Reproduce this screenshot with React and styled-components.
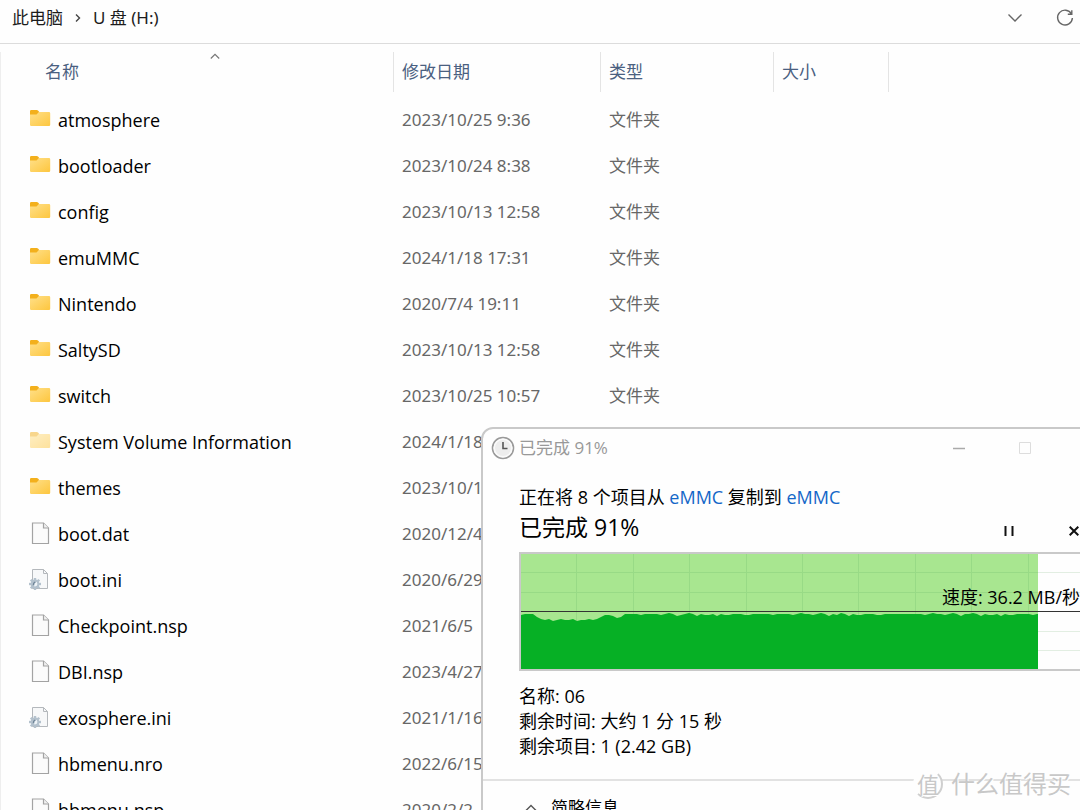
import React from 'react';
import styled, { createGlobalStyle } from 'styled-components';

const Global = createGlobalStyle`
  *, *::before, *::after { box-sizing: border-box; }
  html, body { margin: 0; background: #fefefe; }
  body {
    font-family: "Noto Sans", "Noto Sans CJK SC", sans-serif;
    font-size: 17px;
    line-height: 24px;
  }
  button { padding: 0; border: 0; background: none; color: inherit; font: inherit; }
  svg { display: block; }
`;

const Explorer = styled.div`
  position: relative;
  height: 100vh;
  overflow: hidden;
  color: #111;
`;

const AddressBar = styled.header`
  display: flex;
  align-items: center;
  justify-content: space-between;
  height: 44px;
  padding: 0 5px 7px 12px;
  border-bottom: 1px solid #dcdcdc;
`;

const Crumbs = styled.nav`
  display: flex;
  align-items: center;
  gap: 12px;
`;

const Crumb = styled.a`
  color: #1c1c1c;
  text-decoration: none;
`;

const BarActions = styled.div`
  display: flex;
  gap: 30px;
`;

const IconButton = styled.button`
  display: grid;
  place-items: center;
  width: 20px;
  height: 20px;
`;

const ListPane = styled.main`
  margin-top: 8px;
  border-left: 1px solid #eee;
`;

const FileTable = styled.table`
  width: 100%;
  table-layout: fixed;
  border-collapse: collapse;
  text-align: left;
`;

const Col = styled.col`
  width: ${(p) => p.$width};
`;

const HeadCell = styled.th`
  padding: 0 0 5px;
  font-weight: 400;
`;

const SortButton = styled.button`
  display: flex;
  flex-direction: column;
  width: 100%;
  height: 40px;
  padding-left: ${(p) => p.$indent || '8px'};
  border-right: 1px solid #e4e4e4;
  color: #4a6080;
  text-align: left;
`;

const SortMark = styled.span`
  display: flex;
  justify-content: center;
  width: 100%;
  height: 8px;
  padding-right: 8px;
`;

const NameCell = styled.th`
  height: 46px;
  padding: 0;
  color: #000;
  font-family: "Open Sans", "Noto Sans CJK SC", sans-serif;
  font-size: 18px;
  font-weight: 400;
`;

const FileLabel = styled.span`
  display: flex;
  align-items: center;
  gap: 7px;
  padding-left: 28px;
  white-space: nowrap;
`;

const Cell = styled.td`
  height: 46px;
  padding: 0 0 0 8px;
  color: #676767;
  white-space: nowrap;
`;

const CopyWindow = styled.section`
  position: absolute;
  top: 427px;
  left: 481px;
  width: 648px;
  border: 2px solid #c9c9c9;
  border-radius: 12px;
  background: #fefefe;
  color: #000;
  font-family: "Open Sans", "Noto Sans CJK SC", sans-serif;
`;

const TitleBar = styled.div`
  display: flex;
  align-items: center;
  justify-content: space-between;
  height: 38px;
  padding: 0 92px 0 8px;
  color: #999;
`;

const TitleText = styled.span`
  display: flex;
  align-items: center;
  gap: 4px;
`;

const TitleActions = styled.div`
  display: flex;
  gap: 46px;
`;

const CopyBody = styled.div`
  padding: 18px 37px 0 36px;
  font-size: 18px;
`;

const Line = styled.p`
  margin: 0;
  line-height: 25px;
`;

const PlaceLink = styled.a`
  color: #1467c8;
  text-decoration: none;
`;

const StatusRow = styled.div`
  display: flex;
  align-items: flex-start;
  justify-content: space-between;
  height: 42px;
`;

const Status = styled.h1`
  margin: 0;
  font-size: 23px;
  line-height: 34px;
  font-weight: 400;
`;

const CopyActions = styled.div`
  display: flex;
  gap: 45px;
  padding: 11px 6px 0 0;
`;

const SpeedGraph = styled.div`
  position: relative;
  height: 119px;
  border: 2px solid #c9c9c9;
  background: #fefefe;
`;

const SpeedLabel = styled.span`
  position: absolute;
  top: 31px;
  right: 8px;
`;

const Details = styled.div`
  padding-top: 13px;
`;

const Footer = styled.div`
  display: flex;
  margin-top: 20px;
  padding: 15px 40px;
  border-top: 2px solid #e2e2e2;
`;

const MoreButton = styled.button`
  display: flex;
  align-items: center;
  gap: 12px;
`;

const Watermark = styled.div`
  position: absolute;
  right: 9px;
  bottom: 10px;
  display: flex;
  align-items: center;
  gap: 8px;
  color: #c8c8c8;
  font-size: 24px;
  line-height: 32px;
  text-shadow: 1px 1px 0 #fff;
`;

const Seal = styled.span`
  display: grid;
  place-items: center;
  width: 30px;
  height: 30px;
  border: 2px solid #cfcfcf;
  border-left-color: transparent;
  border-top-color: transparent;
  border-radius: 50%;
  background: #fefefe;
  font-size: 22px;
  line-height: 24px;
`;

const FolderIcon = ({ faded }) => (
  <svg width="22" height="20" viewBox="0 0 22 20" opacity={faded ? 0.5 : 1} aria-hidden="true">
    <defs>
      <linearGradient id="folder" x1="0" y1="0" x2="1" y2="1">
        <stop offset="0" stopColor="#ffe08a" />
        <stop offset="1" stopColor="#fdc63e" />
      </linearGradient>
    </defs>
    <path d="M1 7V1.200Q1 0 2.200 0h5.600q.7 0 1.200.6L10.300 2 8 5z" fill="#f3b01c" />
    <path d="M1 4.500h6.500L10 2h10q1.200 0 1.200 1.200v11.600q0 1.200-1.200 1.200H2.200Q1 16 1 14.800z" fill="url(#folder)" />
  </svg>
);

const FileIcon = () => (
  <svg width="22" height="24" viewBox="0 0 22 24" aria-hidden="true">
    <path d="M3.500 1h11l5 5v15.500h-16z" fill="#fbfbfb" stroke="#a3a3a3" strokeWidth="1.200" />
    <path d="M14.500 1v5h5" fill="#f1f1f1" stroke="#a3a3a3" strokeWidth="1.200" />
  </svg>
);

const teeth = Array.from({ length: 8 }, (_, i) => i * 45);

const IniIcon = () => (
  <svg width="22" height="24" viewBox="0 0 22 24" aria-hidden="true">
    <path d="M3.500 1.500h11l4 4v15h-15z" fill="#f7f8f9" stroke="#b4b8bc" />
    <path d="M14.500 1.500v4h4" fill="none" stroke="#b4b8bc" />
    <g transform="translate(6 16)">
      {teeth.map((a) => (
        <rect key={a} x="-1.200" y="-6" width="2.400" height="3" fill="#b3c1cd" transform={`rotate(${a})`} />
      ))}
      <circle r="3.400" fill="#eef3f7" stroke="#b3c1cd" strokeWidth="2" />
      <path d="M.5-2Q-2-1.500-1.500 1.500" fill="none" stroke="#6f8598" strokeWidth="1.500" />
    </g>
  </svg>
);

const icons = {
  folder: <FolderIcon />,
  faded: <FolderIcon faded />,
  file: <FileIcon />,
  ini: <IniIcon />,
};

const files = [
  ['folder', 'atmosphere', '2023/10/25 9:36'],
  ['folder', 'bootloader', '2023/10/24 8:38'],
  ['folder', 'config', '2023/10/13 12:58'],
  ['folder', 'emuMMC', '2024/1/18 17:31'],
  ['folder', 'Nintendo', '2020/7/4 19:11'],
  ['folder', 'SaltySD', '2023/10/13 12:58'],
  ['folder', 'switch', '2023/10/25 10:57'],
  ['faded', 'System Volume Information', '2024/1/18'],
  ['folder', 'themes', '2023/10/1'],
  ['file', 'boot.dat', '2020/12/4'],
  ['ini', 'boot.ini', '2020/6/29'],
  ['file', 'Checkpoint.nsp', '2021/6/5'],
  ['file', 'DBI.nsp', '2023/4/27'],
  ['ini', 'exosphere.ini', '2021/1/16'],
  ['file', 'hbmenu.nro', '2022/6/15'],
  ['file', 'hbmenu.nsp', '2020/2/2'],
];

// Height of the throughput curve, sampled every four pixels across the copied part.
const dips = [61, 60, 60, 60, 63, 65, 66, 65, 67, 66, 65, 66, 66, 65, 67, 66, 66, 65, 66, 65, 63, 61, 61, 62, 64, 63];
const ripple = [60, 61, 60, 60, 62, 60, 61, 59, 60, 60, 61, 60, 60];
const samples = Array.from({ length: 131 }, (_, i) => dips[i] ?? ripple[(i * 5 + (i >> 3)) % ripple.length]);
const curve = samples.map((y, i) => `L${Math.min(i * 4, 517)} ${y}`).join(' ');
const columns = Array.from({ length: 9 }, (_, i) => Math.round((i + 1) * 56.4) - 0.5);

const SpeedChart = () => (
  <svg width="100%" height="115" viewBox="0 0 567 115" preserveAspectRatio="xMinYMin slice" aria-hidden="true">
    <path d="M0 18.500H567M0 38.500H567M0 77.500H567M0 96.500H567" stroke="#e2eee2" />
    <rect width="517" height="115" fill="#a8e690" />
    <path d={`M0 18.500H517M0 38.500H517${columns.map((x) => `M${x} 0V115`).join('')}`} stroke="#98da86" />
    <path d={`M0 115 ${curve} V115z`} fill="#06b025" />
    <path d="M0 57.500H567" stroke="#333" />
  </svg>
);

export default function App() {
  return (
    <Explorer>
      <Global />
      <AddressBar>
        <Crumbs aria-label="路径">
          <Crumb href="#pc">此电脑</Crumb>
          <svg width="6" height="10" viewBox="0 0 6 10" aria-hidden="true">
            <path d="M1 1.500 4.500 5 1 8.500" fill="none" stroke="#444" strokeWidth="1.400" />
          </svg>
          <Crumb href="#drive">U 盘 (H:)</Crumb>
        </Crumbs>
        <BarActions>
          <IconButton aria-label="展开">
            <svg width="16" height="10" viewBox="0 0 16 10"><path d="M1.500 1.500 8 8l6.500-6.500" fill="none" stroke="#666" strokeWidth="1.400" /></svg>
          </IconButton>
          <IconButton aria-label="刷新">
            <svg width="18" height="18" viewBox="0 0 18 18" fill="none" stroke="#666" strokeWidth="1.400">
              <path d="M15.500 5A7.400 7.400 0 1 0 16.400 9M15.800 1.200v4h-4" />
            </svg>
          </IconButton>
        </BarActions>
      </AddressBar>

      <ListPane>
        <FileTable>
          <colgroup>
            <Col $width="393px" />
            <Col $width="207px" />
            <Col $width="173px" />
            <Col $width="115px" />
            <Col />
          </colgroup>
          <thead>
            <tr>
              <HeadCell scope="col">
                <SortButton $indent="44px">
                  <SortMark>
                    <svg width="10" height="8" viewBox="0 0 10 8"><path d="M.8 6.500 5 2.300l4.200 4.200" fill="none" stroke="#777" strokeWidth="1.200" /></svg>
                  </SortMark>
                  名称
                </SortButton>
              </HeadCell>
              {['修改日期', '类型', '大小'].map((t) => (
                <HeadCell scope="col" key={t}>
                  <SortButton><SortMark />{t}</SortButton>
                </HeadCell>
              ))}
              <td />
            </tr>
          </thead>
          <tbody>
            {files.map(([kind, name, date]) => (
              <tr key={name}>
                <NameCell scope="row"><FileLabel>{icons[kind]}{name}</FileLabel></NameCell>
                <Cell>{date}</Cell>
                <Cell>{kind === 'folder' ? '文件夹' : ''}</Cell>
                <Cell />
                <Cell />
              </tr>
            ))}
          </tbody>
        </FileTable>
      </ListPane>

      <CopyWindow aria-label="已完成 91%">
        <TitleBar>
          <TitleText>
            <svg width="24" height="24" viewBox="0 0 24 24" aria-hidden="true">
              <circle cx="12" cy="12" r="10.500" fill="#ededed" stroke="#9a9a9a" strokeWidth="1.600" />
              <circle cx="12" cy="12" r="8.800" fill="none" stroke="#fafafa" strokeWidth="1.600" />
              <path d="M12 6v6.500h4.500" fill="none" stroke="#555" strokeWidth="1.600" />
            </svg>
            已完成 91%
          </TitleText>
          <TitleActions>
            <IconButton aria-label="最小化">
              <svg width="14" height="14" viewBox="0 0 14 14"><path d="M1 7.500h12" stroke="#aaa" strokeWidth="1.500" /></svg>
            </IconButton>
            <IconButton aria-label="最大化" disabled>
              <svg width="12" height="12" viewBox="0 0 12 12"><path d="M.5.5h11v11H.5z" fill="none" stroke="#ddd" /></svg>
            </IconButton>
          </TitleActions>
        </TitleBar>
        <CopyBody>
          <Line>
            正在将 8 个项目从 <PlaceLink href="#from">eMMC</PlaceLink> 复制到 <PlaceLink href="#to">eMMC</PlaceLink>
          </Line>
          <StatusRow>
            <Status>已完成 91%</Status>
            <CopyActions>
              <IconButton aria-label="暂停">
                <svg width="10" height="10" viewBox="0 0 10 10"><path d="M1.500 0v10M8.500 0v10" stroke="#111" strokeWidth="2" /></svg>
              </IconButton>
              <IconButton aria-label="取消">
                <svg width="10" height="10" viewBox="0 0 10 10"><path d="M.7.7l8.600 8.600M9.300.7.7 9.300" stroke="#111" strokeWidth="2" /></svg>
              </IconButton>
            </CopyActions>
          </StatusRow>
          <SpeedGraph>
            <SpeedChart />
            <SpeedLabel>速度: 36.2 MB/秒</SpeedLabel>
          </SpeedGraph>
          <Details>
            <Line>名称: 06</Line>
            <Line>剩余时间: 大约 1 分 15 秒</Line>
            <Line>剩余项目: 1 (2.42 GB)</Line>
          </Details>
        </CopyBody>
        <Footer>
          <MoreButton>
            <svg width="16" height="12" viewBox="0 0 16 12" aria-hidden="true"><path d="M2.500 9 8 3.500 13.500 9" fill="none" stroke="#555" strokeWidth="1.400" /></svg>
            简略信息
          </MoreButton>
        </Footer>
      </CopyWindow>

      <Watermark>
        <Seal>值</Seal>
        什么值得买
      </Watermark>
    </Explorer>
  );
}
